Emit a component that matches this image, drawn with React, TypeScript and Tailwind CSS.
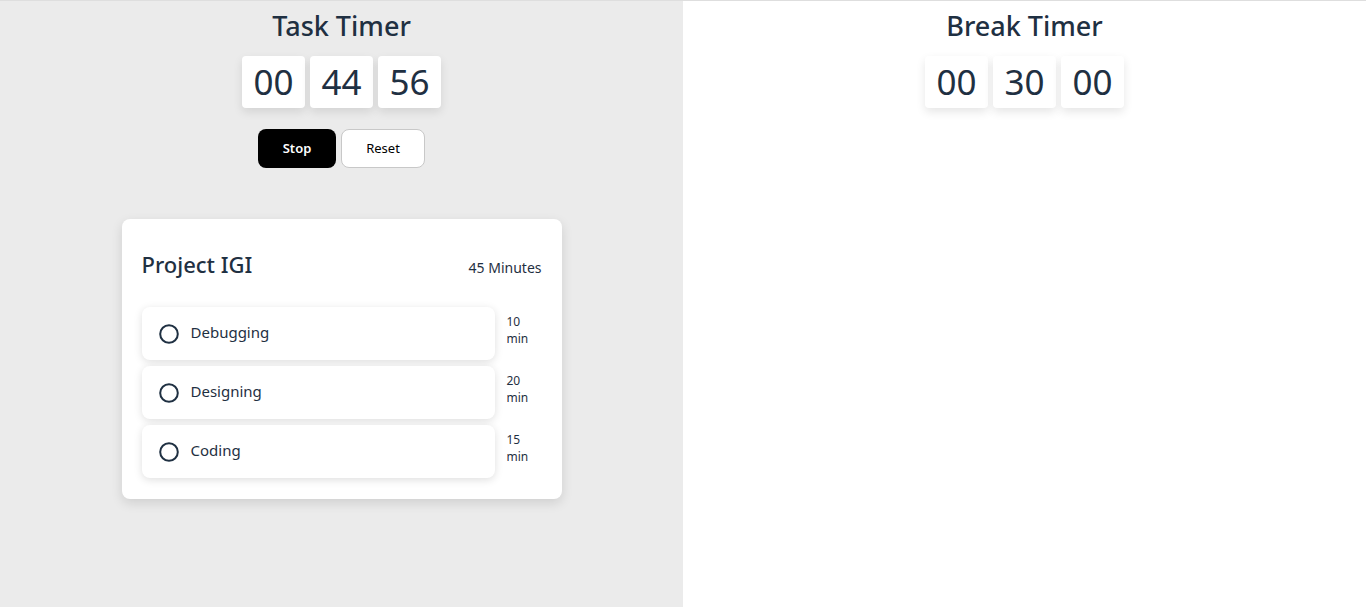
const font = { fontFamily: '"Noto Sans", "Open Sans", sans-serif' };

function Digits({ values }: { values: string[] }) {
  return (
    <div className="flex gap-[5px]">
      {values.map((v, i) => (
        <div
          key={i}
          className="w-[63px] h-[52px] bg-white rounded-[4px] shadow-[0_4px_10px_rgba(0,0,0,0.1)] flex items-center justify-center text-[35px] text-[#1f3042]"
        >
          {v}
        </div>
      ))}
    </div>
  );
}

function Circle() {
  return (
    <svg width="20" height="20" viewBox="0 0 20 20">
      <circle cx="10" cy="10" r="8.8" fill="none" stroke="#1f3042" strokeWidth="2" />
    </svg>
  );
}

const tasks = [
  { name: "Debugging", mins: "10" },
  { name: "Designing", mins: "20" },
  { name: "Coding", mins: "15" },
];

export default function App() {
  return (
    <div style={font} className="flex h-[607px] w-full border-t border-[#dedede] text-[#1f3042]">
      <div className="w-1/2 bg-[#ebebeb] flex flex-col items-center">
        <h1 className="text-[27px] leading-[36px] mt-[7px] font-medium">Task Timer</h1>
        <div className="mt-[12px]">
          <Digits values={["00", "44", "56"]} />
        </div>
        <div className="flex gap-[5px] mt-[21px]">
          <button className="w-[78px] h-[39px] bg-black text-white rounded-[8px] text-[13px] font-semibold">
            Stop
          </button>
          <button className="w-[84px] h-[39px] bg-white border border-[#c8c8c8] rounded-[8px] text-[13px] text-black">
            Reset
          </button>
        </div>
        <div className="mt-[51px] w-[440px] bg-white rounded-[8px] shadow-[0_4px_12px_rgba(0,0,0,0.12)] p-[20px] pb-[21px]">
          <div className="flex justify-between items-end mt-[10px]">
            <h2 className="text-[22px] leading-[30px] font-medium">Project IGI</h2>
            <span className="text-[14px] leading-[20px] mb-[1px]">45 Minutes</span>
          </div>
          <div className="flex flex-col gap-[6px] mt-[28px]">
            {tasks.map((t) => (
              <div key={t.name} className="flex items-start">
                <div className="w-[353px] h-[53px] bg-white rounded-[8px] shadow-[0_2px_8px_rgba(0,0,0,0.13)] flex items-center pl-[17px] gap-[12px]">
                  <Circle />
                  <span className="text-[15px] -mt-[2px]">{t.name}</span>
                </div>
                <div className="ml-[12px] text-[12px] leading-[17px] mt-[6px]">
                  <div>{t.mins}</div>
                  <div>min</div>
                </div>
              </div>
            ))}
          </div>
        </div>
      </div>
      <div className="w-1/2 bg-white flex flex-col items-center">
        <h1 className="text-[27px] leading-[36px] mt-[7px] font-medium">Break Timer</h1>
        <div className="mt-[12px]">
          <Digits values={["00", "30", "00"]} />
        </div>
      </div>
    </div>
  );
}
